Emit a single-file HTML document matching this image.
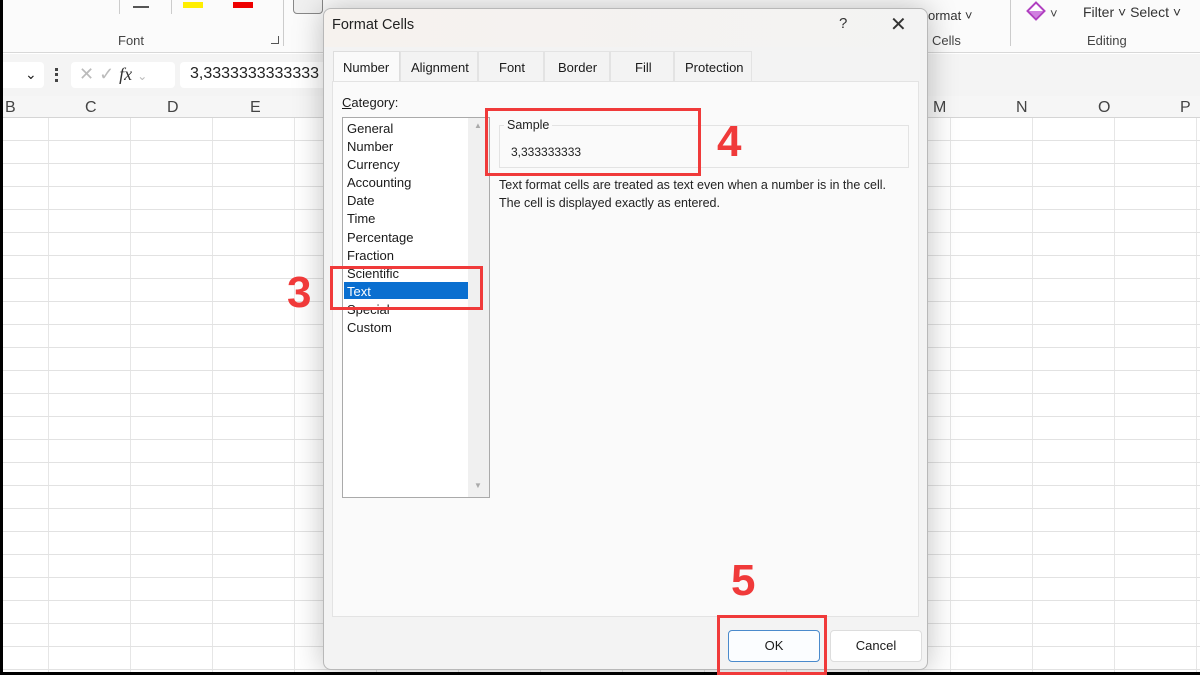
<!DOCTYPE html>
<html><head><meta charset="utf-8"><style>
*{margin:0;padding:0;box-sizing:border-box}
body{width:1200px;height:675px;overflow:hidden;background:#000;font-family:"Liberation Sans",sans-serif;position:relative}
.a{position:absolute}
#pg{left:3px;top:0;width:1197px;height:672px;background:#fff;overflow:hidden}
.ribbon{left:0;top:0;width:1200px;height:53px;background:#fbfbfb;border-bottom:1px solid #d8d8d8}
.fb{left:0;top:54px;width:1200px;height:42px;background:#f4f4f4}
.hdr{left:0;top:96px;width:1200px;height:22px;background:#f6f6f6;border-bottom:1px solid #d5d5d5;font-size:16px;color:#444;padding-top:3px}
.hdr span{top:3px}
.grid{left:0;top:118px;width:1200px;height:560px;background:
repeating-linear-gradient(to bottom,transparent 0 22px,#e2e2e2 22px 23px),
repeating-linear-gradient(to right,transparent 0 45px,#e6e6e6 45px 46px,transparent 46px 82px);}
.red{border:3px solid #f03a3a}
.num{color:#f03a3a;font-weight:bold;font-size:44px}
.dlg{left:323px;top:8px;width:605px;height:662px;background:#f3f3f3;border:1px solid #b8b8b8;border-radius:8px;box-shadow:0 0 30px rgba(0,0,0,.25)}
.t{font-size:13px;color:#1a1a1a}
</style></head><body>
<div id="pg" class="a">
<div class="a ribbon">
 <div class="a" style="left:130px;top:0;width:16px;height:8px;border-bottom:2px solid #555"></div>
 <div class="a" style="left:180px;top:2px;width:20px;height:6px;background:#ffee00"></div>
 <div class="a" style="left:230px;top:2px;width:20px;height:6px;background:#e00"></div>
 <div class="a" style="left:116px;top:0;width:1px;height:14px;background:#ccc"></div>
 <div class="a" style="left:168px;top:0;width:1px;height:14px;background:#ccc"></div>
 <div class="a t" style="left:115px;top:33px;color:#444">Font</div>
 <div class="a" style="left:268px;top:36px;width:8px;height:8px;border-right:1px solid #555;border-bottom:1px solid #555"></div>
 <div class="a" style="left:280px;top:0;width:1px;height:46px;background:#ccc"></div>
 <div class="a" style="left:290px;top:-4px;width:30px;height:18px;border:1px solid #888;border-radius:4px;background:#f0f0f0"></div>
 <div class="a t" style="left:925px;top:8px;color:#333">ormat ˅</div>
 <div class="a t" style="left:929px;top:33px;color:#444">Cells</div>
 <div class="a" style="left:1007px;top:0;width:1px;height:46px;background:#ccc"></div>
 <div class="a" style="left:1026px;top:4px;width:14px;height:14px;border:2px solid #b040c0;transform:rotate(45deg);background:linear-gradient(135deg,#fff 50%,#d080e0 50%)"></div>
 <div class="a t" style="left:1047px;top:6px;color:#444">˅</div>
 <div class="a t" style="left:1080px;top:4px;color:#333;font-size:14px">Filter ˅ Select ˅</div>
 <div class="a t" style="left:1084px;top:33px;color:#444">Editing</div>
</div>
<div class="a fb">
 <div class="a" style="left:-4px;top:8px;width:45px;height:26px;background:#fff;border-radius:4px"></div>
 <div class="a t" style="left:22px;top:12px;font-size:14px">⌄</div>
 <div class="a" style="left:52px;top:14px;width:3px;height:14px;border-left:3px dotted #444"></div>
 <div class="a" style="left:68px;top:8px;width:104px;height:26px;background:#fff;border-radius:4px;color:#bbb;font-size:18px;padding:2px 8px">✕ ✓ <i style="color:#333;font-family:'Liberation Serif',serif">fx</i> <span style="font-size:12px">⌄</span></div>
 <div class="a" style="left:177px;top:8px;width:160px;height:26px;background:#fff;border-radius:4px;font-size:16px;color:#222;padding:3px 10px">3,3333333333333</div>
</div>
<div class="a hdr">
 <span class="a" style="left:2px">B</span><span class="a" style="left:82px">C</span><span class="a" style="left:164px">D</span><span class="a" style="left:247px">E</span>
 <span class="a" style="left:930px">M</span><span class="a" style="left:1013px">N</span><span class="a" style="left:1095px">O</span><span class="a" style="left:1177px">P</span>
</div>
<div class="a grid"></div>
</div>

<div class="a dlg">
 <div class="a" style="left:0;top:0;width:603px;height:38px;background:linear-gradient(to right,#f6f2ee,#f3f3f3);border-radius:8px 8px 0 0"></div>
 <div class="a" style="left:8px;top:8px;font-size:14.5px;color:#222">Format Cells</div>
 <div class="a" style="left:515px;top:6px;font-size:15px;color:#333">?</div>
 <div class="a" style="left:566px;top:3px;font-size:20px;color:#333">✕</div>
 <div class="a t" style="left:9px;top:42px;width:67px;height:31px;background:#fafafa;border:1px solid #ddd;border-bottom:none;padding:8px 0 0 9px">Number</div>
 <div class="a t" style="left:76px;top:42px;width:78px;height:31px;border:1px solid #e3e3e3;padding:8px 0 0 10px">Alignment</div>
 <div class="a t" style="left:154px;top:42px;width:66px;height:31px;border:1px solid #e3e3e3;padding:8px 0 0 20px">Font</div>
 <div class="a t" style="left:220px;top:42px;width:66px;height:31px;border:1px solid #e3e3e3;padding:8px 0 0 13px">Border</div>
 <div class="a t" style="left:286px;top:42px;width:64px;height:31px;border:1px solid #e3e3e3;padding:8px 0 0 24px">Fill</div>
 <div class="a t" style="left:350px;top:42px;width:78px;height:31px;border:1px solid #e3e3e3;padding:8px 0 0 10px">Protection</div>
 <div class="a" style="left:8px;top:72px;width:587px;height:536px;background:#fafafa;border:1px solid #e3e3e3"></div>
 <div class="a t" style="left:18px;top:86px"><u>C</u>ategory:</div>
 <div class="a" style="left:18px;top:108px;width:148px;height:381px;background:#fff;border:1px solid #aaa"></div>
 <div class="a" style="left:144px;top:109px;width:21px;height:379px;background:#f0f0f0"></div>
 <div class="a" style="left:150px;top:112px;font-size:8px;color:#aaa">▲</div>
 <div class="a" style="left:150px;top:472px;font-size:8px;color:#aaa">▼</div>
 <div class="a" style="left:20px;top:273px;width:124px;height:17px;background:#0a6fd0"></div>
 <div class="a t" style="left:23px;top:111px;line-height:18.1px">General<br>Number<br>Currency<br>Accounting<br>Date<br>Time<br>Percentage<br>Fraction<br>Scientific<br><span style="color:#fff">Text</span><br>Special<br>Custom</div>
 <div class="a" style="left:175px;top:116px;width:410px;height:43px;border:1px solid #e3e3e3"></div>
 <div class="a" style="left:180px;top:109px;font-size:12.5px;color:#222;background:#fafafa;padding:0 3px">Sample</div>
 <div class="a" style="left:187px;top:136px;font-size:12px;color:#222">3,333333333</div>
 <div class="a" style="left:175px;top:167px;font-size:12.5px;color:#222;line-height:18px">Text format cells are treated as text even when a number is in the cell.<br>The cell is displayed exactly as entered.</div>
 <div class="a t" style="left:404px;top:621px;width:92px;height:32px;background:#fbfdff;border:1px solid #4a8acc;border-radius:4px;text-align:center;line-height:30px">OK</div>
 <div class="a t" style="left:506px;top:621px;width:92px;height:32px;background:#fff;border:1px solid #ddd;border-radius:4px;text-align:center;line-height:30px">Cancel</div>
</div>

<div class="a red" style="left:330px;top:266px;width:153px;height:44px"></div>
<div class="a num" style="left:287px;top:268px">3</div>
<div class="a red" style="left:485px;top:108px;width:216px;height:68px"></div>
<div class="a num" style="left:717px;top:117px">4</div>
<div class="a red" style="left:717px;top:615px;width:110px;height:60px"></div>
<div class="a num" style="left:731px;top:556px">5</div>
</body></html>
